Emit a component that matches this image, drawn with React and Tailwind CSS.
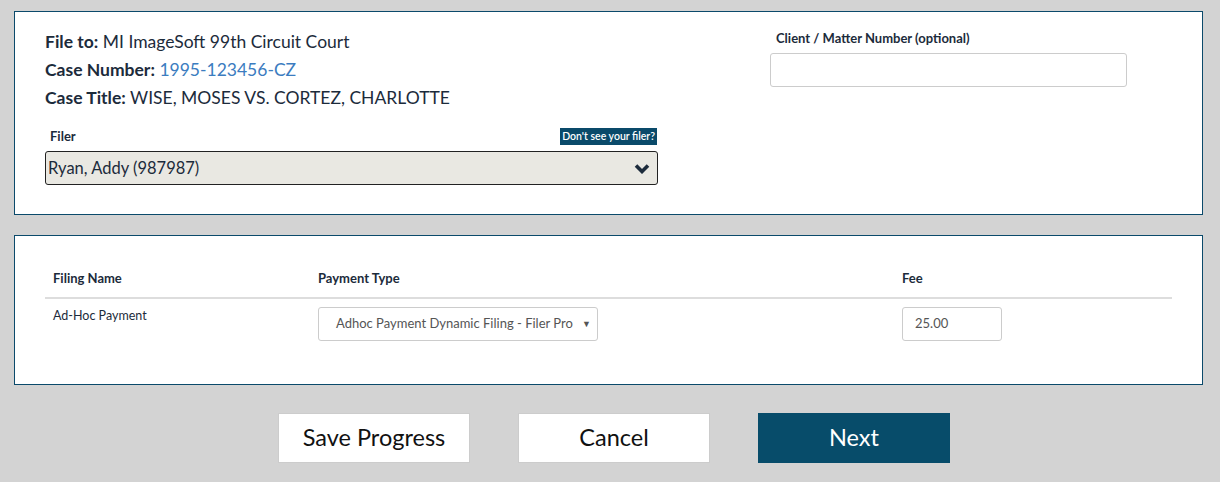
import React from 'react';

const font = { fontFamily: 'Lato, "Open Sans", sans-serif' };

const Chevron = () => (
  <svg width="16" height="11" viewBox="0 0 16 11" className="text-[#1c2b3b]">
    <polyline points="2,2.5 8,8.5 14,2.5" fill="none" stroke="currentColor" strokeWidth="3.6" strokeLinecap="butt" strokeLinejoin="miter" />
  </svg>
);

const App = () => {
  return (
    <div className="bg-[#d3d3d3] h-[482px] w-[1220px] pl-[14px] pr-[17px] pt-[11px] text-[#1c2b3b] font-['Lato','Open_Sans',sans-serif]">
      {/* case info panel */}
      <div className="h-[204px] bg-white border border-[#0b4a6b] flex pl-[30px] pt-[16px]">
        <div className="w-[613px]">
          <div className="text-[17.5px] leading-[28px]">
            <p><span className="font-bold">File to:</span> MI ImageSoft 99th Circuit Court</p>
            <p><span className="font-bold">Case Number:</span> <span className="text-[#3b7cc0]">1995-123456-CZ</span></p>
            <p><span className="font-bold">Case Title:</span> WISE, MOSES VS. CORTEZ, CHARLOTTE</p>
          </div>
          <div className="mt-[14px] flex items-end justify-between h-[19px]">
            <span className="pl-[5px] text-[13px] font-bold leading-[18px]">Filer</span>
            <span className="bg-[#0a4a6a] text-white text-[10.5px] font-semibold leading-[17px] px-[2px] mr-[1px]">Don't see your filer?</span>
          </div>
          <div className="mt-[6px] h-[34px] bg-[#e9e8e2] border border-[#222] rounded-[3px] flex items-center justify-between pl-[2px] pr-[7px]">
            <span className="text-[16.5px]">Ryan, Addy (987987)</span>
            <Chevron />
          </div>
        </div>
        <div className="ml-[112px] w-[357px] pt-[1px]">
          <div className="pl-[6px] text-[13px] font-bold leading-[18px]">Client / Matter Number (optional)</div>
          <div className="mt-[6px] h-[34px] border border-[#cccccc] rounded-[3px]"></div>
        </div>
      </div>

      {/* filings panel */}
      <div className="mt-[20px] h-[150px] bg-white border border-[#0b4a6b] px-[30px] pt-[28px]">
        <div className="grid grid-cols-[265px_584px_1fr] border-b-2 border-[#dddddd] h-[35px] text-[13px] font-bold leading-[28px]">
          <div className="pl-[8px]">Filing Name</div>
          <div className="pl-[8px]">Payment Type</div>
          <div className="pl-[8px]">Fee</div>
        </div>
        <div className="grid grid-cols-[265px_584px_1fr] pt-[8px] text-[13px]">
          <div className="pl-[8px] leading-[18px] text-[12.5px]">Ad-Hoc Payment</div>
          <div className="pl-[8px]">
            <div className="w-[280px] h-[34px] border border-[#cccccc] rounded-[3px] flex items-center justify-between pl-[17px] pr-[6px] text-[#555555]">
              <span>Adhoc Payment Dynamic Filing - Filer Pro</span>
              <span className="text-[9px]">▼</span>
            </div>
          </div>
          <div className="pl-[8px]">
            <div className="w-[100px] h-[34px] border border-[#cccccc] rounded-[3px] flex items-center pl-[12px] text-[#555555]">25.00</div>
          </div>
        </div>
      </div>

      {/* actions */}
      <div className="mt-[28px] flex justify-center gap-[48px] pl-[11px]" style={font}>
        <button className="w-[192px] h-[50px] bg-white border border-[#cccccc] text-[23.5px] text-[#111]">Save Progress</button>
        <button className="w-[192px] h-[50px] bg-white border border-[#cccccc] text-[23.5px] text-[#111]">Cancel</button>
        <button className="w-[192px] h-[50px] bg-[#074c6a] border border-[#074c6a] text-[23.5px] text-white">Next</button>
      </div>
    </div>
  );
};

export default App;
